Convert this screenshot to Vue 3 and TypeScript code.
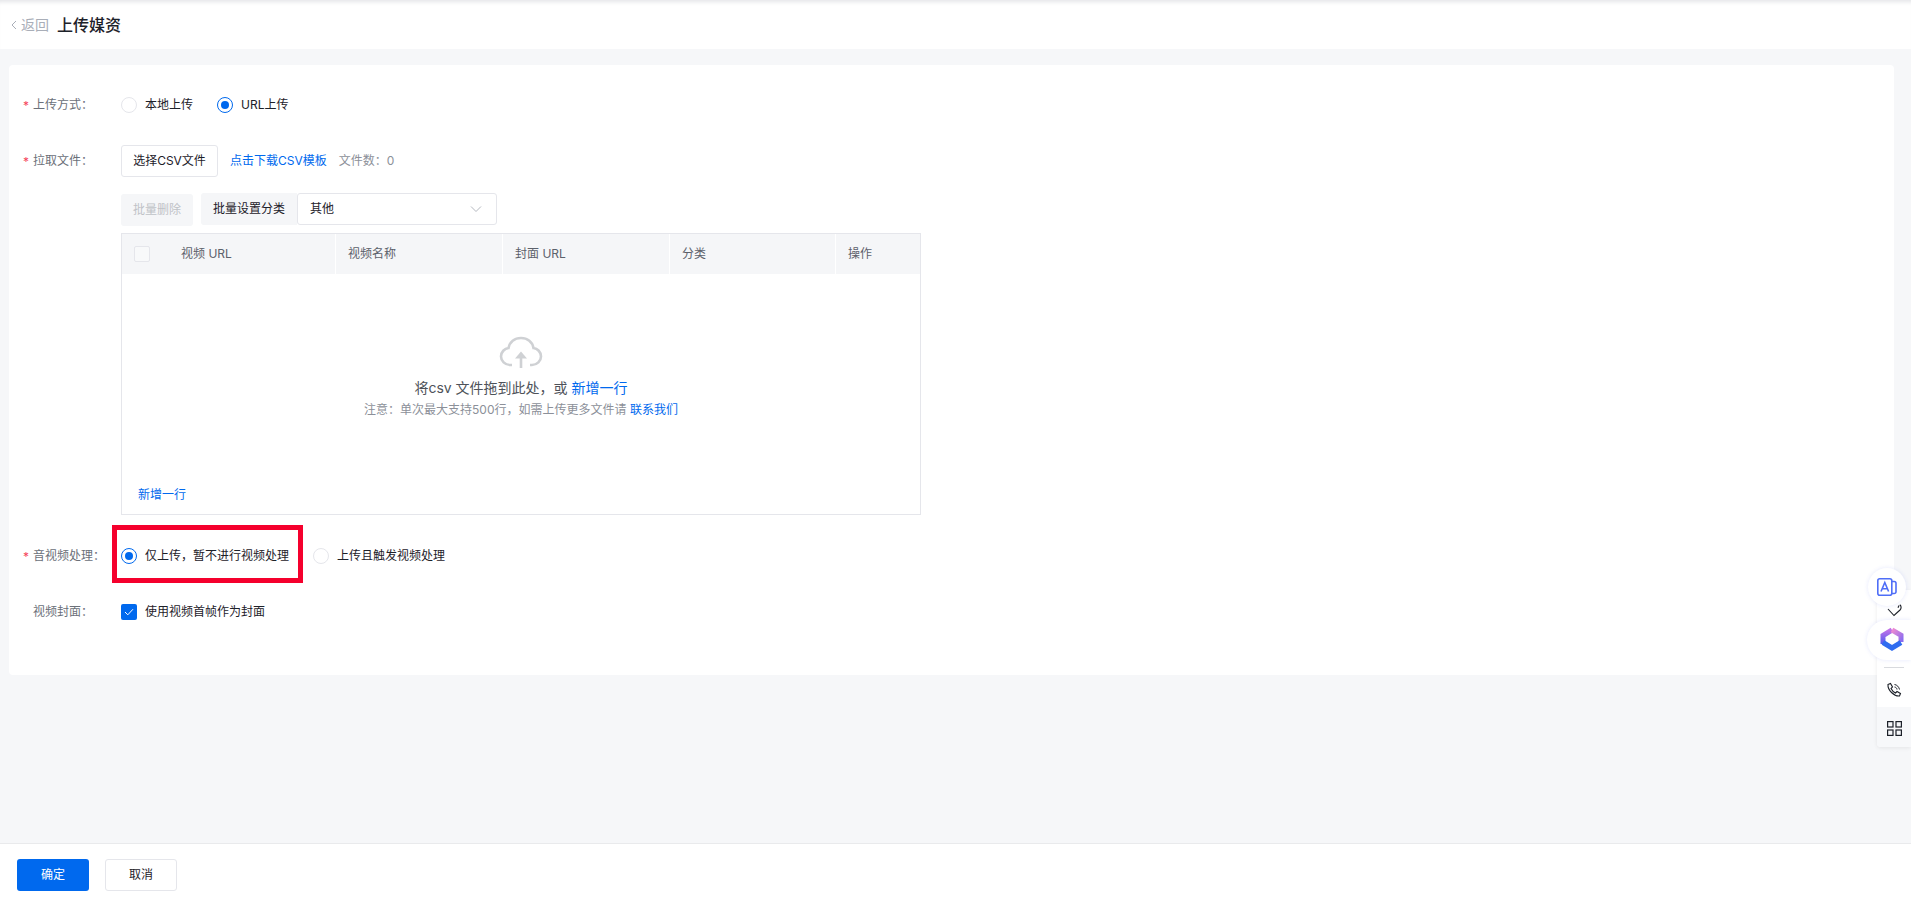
<script setup lang="ts">
const columns: string[] = ['视频名称', '封面 URL', '分类', '操作']
</script>

<template>
  <div class="page">
    <header class="top">
      <a class="back">
        <svg width="6" height="10" viewBox="0 0 6 10"><path d="M5 1 1 5l4 4" fill="none" stroke="#a9aeb8" stroke-width="1"/></svg>
        返回
      </a>
      <h1>上传媒资</h1>
    </header>

    <main class="main">
      <section class="card">
        <div class="row row-method">
          <label class="lbl"><i>*</i>上传方式&#xFF1A;</label>
          <div class="ctl">
            <span class="radio"><b class="dot"></b>本地上传</span>
            <span class="radio on"><b class="dot"></b>URL上传</span>
          </div>
        </div>

        <div class="row row-file">
          <label class="lbl"><i>*</i>拉取文件&#xFF1A;</label>
          <div class="ctl col">
            <div class="line">
              <button class="btn">选择CSV文件</button>
              <a class="link">点击下载CSV模板</a>
              <span class="count">文件数&#xFF1A;0</span>
            </div>
            <div class="tools">
              <button class="btn-disabled">批量删除</button>
              <div class="group">
                <span class="addon">批量设置分类</span>
                <div class="select">
                  其他
                  <svg width="12" height="8" viewBox="0 0 12 8"><path d="M1 1.500l5 5 5-5" fill="none" stroke="#b4b8bf" stroke-width="1"/></svg>
                </div>
              </div>
            </div>
            <div class="table">
              <div class="thead">
                <div class="th first"><span class="check"></span><span>视频 URL</span></div>
                <div v-for="c in columns" :key="c" class="th">{{ c }}</div>
              </div>
              <div class="tbody">
                <svg class="cloud" width="44" height="32" viewBox="0 0 44 32" fill="none">
                  <path d="M13 29H11C6 29 2 25 2 20.500 2 16 5.500 12.500 9.500 12 10.500 6 15.500 2 22 2 28.500 2 33.500 6 34.500 12 38.500 12.500 42 16 42 20.500 42 25 38 29 33 29H31" stroke="#cfd1d4" stroke-width="2.600"/>
                  <path d="M22 32V20" stroke="#cfd1d4" stroke-width="2.600"/>
                  <path d="M22 15.500 28 22.500H16Z" fill="#cfd1d4"/>
                </svg>
                <p class="drop">将csv 文件拖到此处&#xFF0C;或 <a>新增一行</a></p>
                <p class="note">注意&#xFF1A;单次最大支持500行&#xFF0C;如需上传更多文件请 <a>联系我们</a></p>
                <a class="add">新增一行</a>
              </div>
            </div>
          </div>
        </div>

        <div class="row row-av">
          <label class="lbl"><i>*</i>音视频处理&#xFF1A;</label>
          <div class="ctl">
            <span class="radio on marked"><b class="dot"></b>仅上传&#xFF0C;暂不进行视频处理</span>
            <span class="radio"><b class="dot"></b>上传且触发视频处理</span>
          </div>
        </div>

        <div class="row row-cover">
          <label class="lbl">视频封面&#xFF1A;</label>
          <div class="ctl">
            <span class="checked">
              <b class="box"><svg width="10" height="8" viewBox="0 0 10 8"><path d="M1 4l2.800 2.800L9 1.200" fill="none" stroke="#fff" stroke-width="1"/></svg></b>
              使用视频首帧作为封面
            </span>
          </div>
        </div>
      </section>
    </main>

    <footer class="foot">
      <button class="primary">确定</button>
      <button class="cancel">取消</button>
    </footer>

    <aside class="dock">
      <div class="dock-item heart">
        <svg width="16" height="16" viewBox="0 0 16 16" fill="none"><path d="M2 5 8 11.500 14 6C15.500 4.500 15.500 2 13.800 .8" stroke="#1d2129" stroke-width="1.100"/><path d="M12 3.800 13 1.500" stroke="#1d2129" stroke-width="1.100"/></svg>
      </div>
      <div class="dock-divider"></div>
      <div class="dock-item phone">
        <svg width="16" height="16" viewBox="0 0 16 16" fill="none"><path d="M2 2.500 4.500 1.500 6.500 5 5 6.500C6 8.500 7.500 10 9.500 11L11 9.500 14.500 11.500 13.500 14C8 14.500 1.500 8 2 2.500Z" stroke="#1d2129" stroke-width="1.100"/><path d="M8.500 2.500C11 2.800 13 5 13.500 7.500M8.500 5C10 5.300 10.800 6 11 7.500" stroke="#1d2129" stroke-width="1"/></svg>
      </div>
      <div class="dock-item grid">
        <svg width="15" height="15" viewBox="0 0 15 15" fill="none" stroke="#1d2129" stroke-width="1.200"><rect x=".6" y=".6" width="5.400" height="5.400"/><rect x="9" y=".6" width="5.400" height="5.400"/><rect x=".6" y="9" width="5.400" height="5.400"/><rect x="9" y="9" width="5.400" height="5.400"/></svg>
      </div>
    </aside>
    <div class="float translate">
      <svg width="20" height="18" viewBox="0 0 20 18" fill="none">
        <rect x=".8" y=".8" width="14" height="16.400" rx="2" stroke="#4f6ef7" stroke-width="1.600"/>
        <path d="M15 3.500h2.200a1.800 1.800 0 0 1 1.800 1.800v8.400a1.800 1.800 0 0 1-1.800 1.800H15" stroke="#4f6ef7" stroke-width="1.600"/>
        <path d="M4 13.500 7.800 4.500l3.800 9M5.300 10.800h5" stroke="#4f6ef7" stroke-width="1.600"/>
      </svg>
    </div>
    <div class="float logo">
      <svg width="24" height="26" viewBox="0 0 24 26" fill="none">
        <defs>
          <linearGradient id="lg1" x1="0" y1="0" x2="1" y2="1"><stop offset="0" stop-color="#f08ad0"/><stop offset="1" stop-color="#8a6cf0"/></linearGradient>
          <linearGradient id="lg2" x1="0" y1="0" x2="0" y2="1"><stop offset="0" stop-color="#c070e8"/><stop offset="1" stop-color="#4f5cf0"/></linearGradient>
        </defs>
        <path d="M3 17V8.500L12 3" stroke="url(#lg2)" stroke-width="5"/>
        <path d="M12 3 21 8.300V15" stroke="url(#lg1)" stroke-width="5"/>
        <path d="M3 15.500 12 21 21 15.500" stroke="#2f6cf0" stroke-width="5"/>
      </svg>
    </div>
  </div>
</template>

<style>
html, body { margin: 0; background: #f6f7f9; }
</style>

<style scoped>
.page {
  position: relative;
  width: 1911px;
  height: 902px;
  overflow: hidden;
  background: #f6f7f9;
  display: flex;
  flex-direction: column;
  font: 12px/20px Inter, "Noto Sans CJK SC", sans-serif;
  color: #1d2129;
}
.top {
  height: 49px;
  flex: none;
  background: #fff;
  display: flex;
  align-items: center;
  padding-left: 11px;
  box-shadow: inset 0 5px 4px -3px #e4e5e8;
}
.back { display: flex; align-items: center; gap: 4px; font-size: 14px; color: #a9aeb8; margin-right: 8px; }
h1 { margin: 0; font-size: 16px; line-height: 24px; font-weight: 500; color: #1d2129; }
.main { flex: 1; padding: 16px 17px 0 9px; min-height: 0; }
.card { height: 610px; box-sizing: border-box; background: #fff; border-radius: 4px; padding-top: 30px; }
.row { display: flex; }
.lbl { width: 112px; padding-left: 24px; box-sizing: border-box; flex: none; color: #6b7079; position: relative; }
.lbl i { position: absolute; left: 14px; top: 1px; color: #f5455c; font-style: normal; }
.ctl { display: flex; align-items: center; }
.col { flex-direction: column; align-items: flex-start; }
.row-method .lbl, .row-method .ctl { height: 20px; }
.radio { display: inline-flex; align-items: center; gap: 8px; margin-right: 24px; }
.dot { width: 16px; height: 16px; box-sizing: border-box; border-radius: 50%; border: 1px solid #e5e6eb; position: relative; background: #fff; }
.on .dot { border-color: #0069ee; }
.on .dot::after { content: ""; position: absolute; inset: 3px; border-radius: 50%; background: #0069ee; }
.row-file { margin-top: 30px; }
.row-file .lbl { padding-top: 6px; height: 26px; }
.row-file .lbl i { top: 7px; }
.line { display: flex; align-items: center; height: 32px; }
.btn { height: 32px; width: 97px; box-sizing: border-box; border: 1px solid #e5e6eb; border-radius: 3px; background: #fff; font: inherit; color: #1d2129; padding: 0; }
.link { color: #0069ee; margin-left: 12px; }
.count { color: #8c9099; margin-left: 12px; }
.tools { display: flex; margin-top: 16px; }
.btn-disabled { width: 72px; height: 32px; border: 0; border-radius: 3px; background: #f5f6f8; color: #bfc2c7; font: inherit; padding: 0; margin-top: 1px; }
.group { display: flex; margin-left: 8px; height: 32px; }
.addon { width: 96px; padding-left: 12px; box-sizing: border-box; background: #f5f6f8; border-radius: 3px 0 0 3px; line-height: 32px; }
.select { width: 200px; box-sizing: border-box; border: 1px solid #e5e6eb; border-radius: 3px; background: #fff; padding: 0 14px 0 12px; display: flex; align-items: center; justify-content: space-between; }
.table { width: 800px; box-sizing: border-box; border: 1px solid #e5e6eb; margin-top: 7px; height: 282px; }
.thead { display: grid; grid-template-columns: 213px 167px 167px 166px 1fr; height: 40px; background: #f5f6f8; }
.th { padding-left: 12px; line-height: 40px; color: #5c616b; border-left: 1px solid #fff; }
.th:first-child { border-left: 0; }
.first { display: flex; align-items: center; padding-left: 12px; gap: 31px; }
.check { width: 16px; height: 16px; box-sizing: border-box; border: 1px solid #e5e6eb; border-radius: 2px; background: #f8f9fa; }
.tbody { height: 240px; display: flex; flex-direction: column; align-items: center; position: relative; padding-top: 62px; box-sizing: border-box; }
.cloud { display: block; }
.drop { margin: 9px 0 0; font-size: 14px; line-height: 22px; color: #4e5259; }
.drop a, .note a, .add { color: #0069ee; }
.note { margin: 1px 0 0; color: #8c9099; line-height: 20px; }
.add { position: absolute; left: 16px; bottom: 9px; }
.row-av { margin-top: 31px; }
.row-av .ctl, .row-av .lbl { height: 20px; }
.marked { position: relative; }
.marked::before { content: ""; position: absolute; left: -9px; top: -21px; width: 191px; height: 58px; box-sizing: border-box; border: 5px solid #f5002d; }
.row-cover { margin-top: 36px; }
.row-cover .ctl, .row-cover .lbl { height: 20px; }
.checked { display: inline-flex; align-items: center; gap: 8px; }
.box { width: 16px; height: 16px; border-radius: 2px; background: #0069ee; display: flex; align-items: center; justify-content: center; }
.foot { height: 59px; flex: none; box-sizing: border-box; background: #fff; border-top: 1px solid #e9eaec; padding: 15px 17px 0; display: flex; gap: 16px; align-items: flex-start; }
.primary, .cancel { width: 72px; height: 32px; box-sizing: border-box; border-radius: 3px; font: inherit; padding: 0; }
.primary { background: #0069ee; color: #fff; border: 0; }
.cancel { background: #fff; color: #1d2129; border: 1px solid #e5e6eb; }
.dock { position: absolute; left: 1877px; top: 590px; width: 34px; height: 157px; background: #fff; border-radius: 4px 0 0 4px; box-shadow: 0 1px 4px rgba(0,0,0,.08); display: flex; flex-direction: column; align-items: center; }
.dock-item { width: 34px; display: flex; justify-content: center; align-items: center; flex: none; box-sizing: border-box; }
.heart { height: 30px; align-items: flex-end; }
.dock-divider { width: 20px; height: 1px; background: #d8dade; margin-top: 47px; }
.phone { height: 39px; padding-top: 4px; }
.grid { height: 40px; padding-top: 2px; background: #f7f8fa; border-radius: 0 0 0 4px; }
.float { position: absolute; background: #fff; display: flex; align-items: center; justify-content: center; box-shadow: 0 0 4px rgba(80,100,240,.14); box-sizing: border-box; }
.translate { left: 1868px; top: 568px; width: 38px; height: 38px; border-radius: 50%; }
.logo { left: 1867px; top: 620px; width: 44px; height: 40px; border-radius: 20px 0 0 20px; padding-left: 6px; }
</style>
